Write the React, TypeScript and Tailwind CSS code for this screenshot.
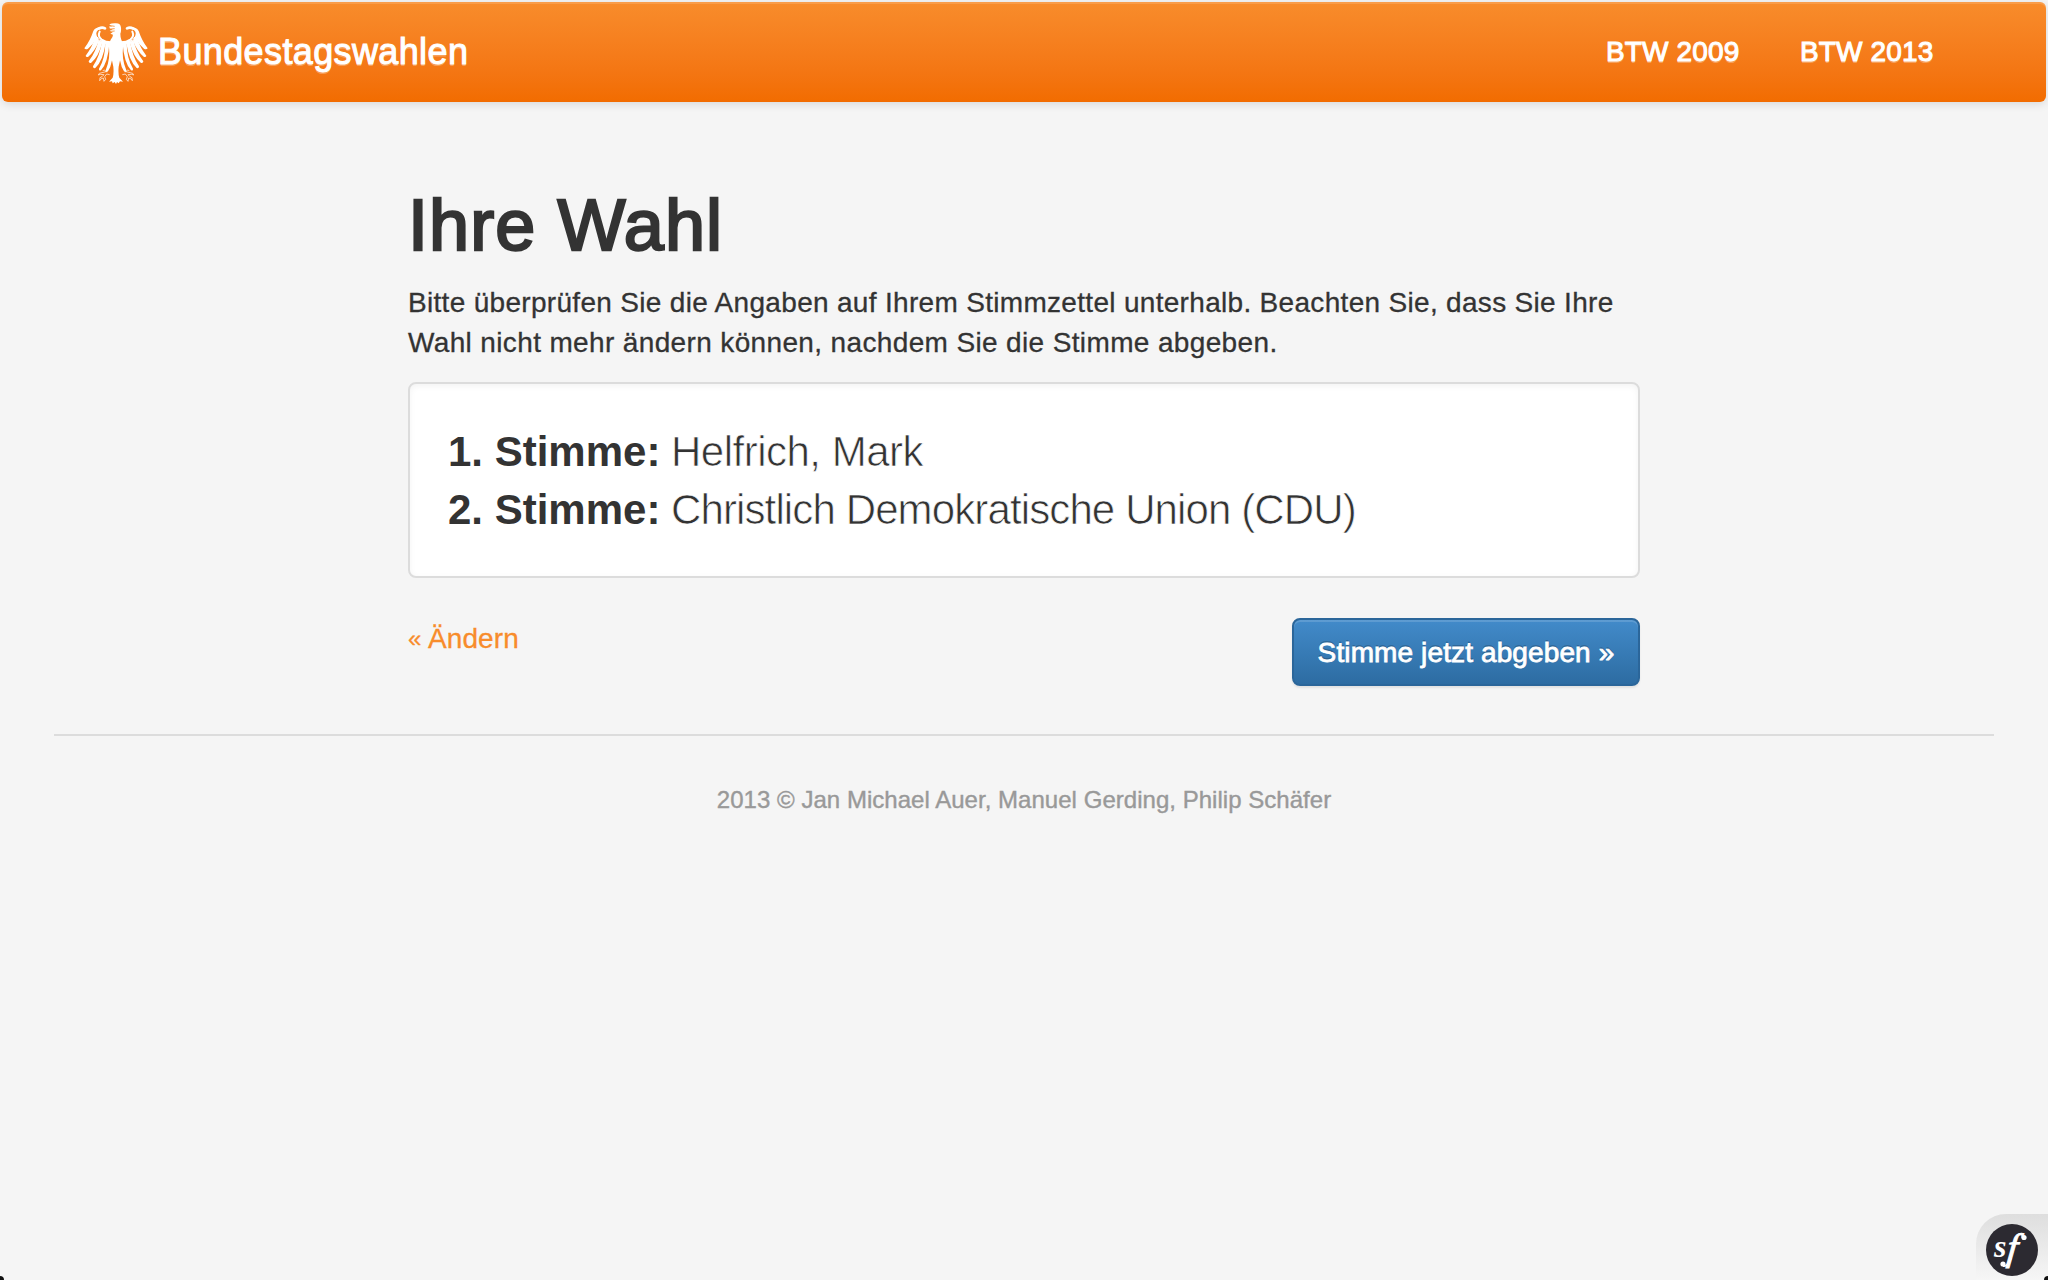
function WingAndTalon() {
  return (
    <>
      <g fill="none" stroke="#fff" strokeLinecap="round">
        <path d="M75 42Q66 37 56 43" strokeWidth="8" />
        <path d="M59 52Q52 66 65 76Q78 85 96 84" strokeWidth="6" />
      </g>
      <g fill="#fff">
        <path d="M60 39Q46 39 40 50Q30 80 13 102Q17 107 24 103Q40 90 48 74L57 74Q46 62 50 52Q54 45 62 44Z" />
        <path d="M46 68Q36 100 17 124Q17 129 24 128Q44 112 57 80L54 68Z" />
        <path d="M56 76Q48 112 26 141Q26 147 33 146Q56 128 67 84Z" />
        <path d="M66 80Q60 124 39 156Q38 163 46 161Q69 140 77 86Z" />
        <path d="M76 83Q76 132 57 163Q56 171 63 168Q84 144 88 88Z" />
        <path d="M87 84Q92 135 77 168Q77 176 84 171Q100 148 100 86Z" />
        <path d="M60 76Q76 84 98 82V92Q70 92 54 74Z" />
      </g>
      <path
        d="M84 160L78 172L58 177L55 182L61 180L72 181L66 187L60 190L59 199L64 193L70 191L72 201L77 195L74 187L80 179L89 181M80 174L74 167L68 169"
        fill="none"
        stroke="#fff"
        strokeWidth="2.4"
        strokeOpacity=".85"
      />
    </>
  );
}

function Eagle() {
  return (
    <svg viewBox="12 26 192 183" className="mt-0.5 h-[61px] w-16 shrink-0" aria-hidden="true">
      <WingAndTalon />
      <g transform="translate(216 0) scale(-1 1)">
        <WingAndTalon />
      </g>
      <path
        fill="#fff"
        d="M88 30Q96 26 108 27Q122 27 123 40Q124 50 121 58Q121 69 124 76Q133 90 126 116Q120 136 116 157Q114 178 118 190L129 202L120 201L116 207L111 203L108 209L104 203L98 207L96 201L87 202L98 190Q102 178 100 157Q96 136 90 116Q83 90 92 76Q99 68 99 61L91 58L98 54L89 49L98 46L89 42L88 36L96 37Z"
      />
      <path d="M91 34L104 36M92 44L104 43M94 51L104 50" stroke="#f6831f" strokeWidth="2.4" fill="none" />
    </svg>
  );
}

function Navbar() {
  return (
    <header className="mx-0.5 mt-0.5 flex h-[100px] items-center rounded-md bg-linear-to-b from-[#f88c2b] to-[#f26c00] pr-[112px] pl-[82px] text-white shadow-[inset_0_2px_0_rgba(255,255,255,0.15),0_2px_10px_rgba(0,0,0,0.12)] [text-shadow:0_2px_0_rgba(255,255,255,0.3)]">
      <a className="flex items-center gap-[10px]">
        <Eagle />
        <span className="text-[36px] leading-10 tracking-[0.38px] [-webkit-text-stroke:1px_white]">Bundestagswahlen</span>
      </a>
      <nav className="ml-auto flex gap-[60px] text-[28px] leading-10 tracking-[0.15px] [-webkit-text-stroke:1px_white]">
        <a className="w-[134px] whitespace-nowrap">BTW 2009</a>
        <a className="w-[134px] whitespace-nowrap">BTW 2013</a>
      </nav>
    </header>
  );
}

function Vote({ label, choice, spacing }: { label: string; choice: string; spacing: string }) {
  return (
    <div className="flex whitespace-nowrap">
      <b className="w-[223px]">{label}</b>
      <span className={`${spacing} [-webkit-text-stroke:0.7px_white]`}>{choice}</span>
    </div>
  );
}

function DebugToolbar() {
  return (
    <div className="fixed right-0 bottom-0 flex h-[66px] w-[72px] rounded-tl-[30px] bg-linear-to-b from-[#dedede] to-[#f6f6f6] pt-[10px] pl-[10px]">
      <svg viewBox="0 0 52 52" className="size-[52px]" aria-label="Symfony">
        <circle cx="26" cy="26" r="26" fill="#2c2a31" />
        <text x="8" y="33" fill="#fff" fontFamily="Liberation Serif, serif" fontStyle="italic" fontWeight="bold" fontSize="32">s</text>
        <text x="20" y="36" fill="#fff" fontFamily="Liberation Serif, serif" fontStyle="italic" fontSize="38" stroke="#fff" strokeWidth="1" transform="skewX(-6) translate(4 0)">f</text>
        <circle cx="38" cy="13.5" r="2.6" fill="#fff" />
        <circle cx="17" cy="40" r="2.6" fill="#fff" />
        <path d="M17 42Q22 43 25 34" stroke="#fff" strokeWidth="2" fill="none" />
      </svg>
    </div>
  );
}

export default function App() {
  return (
    <div className="flow-root min-h-screen bg-[#f5f5f5] font-['Liberation_Sans',Arial,sans-serif] text-[#333]">
      <Navbar />
      <main className="mx-auto mt-[83px] w-[1232px]">
        <h1 className="text-[72px] leading-[80px] tracking-[1.08px] [-webkit-text-stroke:2.4px_#333]">Ihre Wahl</h1>
        <p className="mt-[18px] text-[28px] leading-10 whitespace-nowrap [-webkit-text-stroke:0.3px_#333]">
          <span className="block tracking-[0.31px]">
            Bitte überprüfen Sie die Angaben auf Ihrem Stimmzettel unterhalb. Beachten Sie, dass Sie Ihre
          </span>
          <span className="block tracking-[0.36px]">Wahl nicht mehr ändern können, nachdem Sie die Stimme abgeben.</span>
        </p>
        <section className="mt-[19px] rounded-lg border-2 border-[#dcdcdc] bg-white px-[38px] pt-[39px] pb-[37px] text-[42px] leading-[58px] shadow-[inset_0_2px_6px_rgba(0,0,0,0.05)]">
          <Vote label="1. Stimme:" choice="Helfrich, Mark" spacing="tracking-[-0.5px]" />
          <Vote label="2. Stimme:" choice="Christlich Demokratische Union (CDU)" spacing="tracking-[-0.88px]" />
        </section>
        <div className="mt-10 flex items-start justify-between text-[28px] leading-10">
          <a className="mt-px flex gap-[6px] tracking-[0.1px] text-[#f88c2b] [-webkit-text-stroke:0.3px_#f88c2b]">
            <span className="w-[14px] text-[24px]">«</span>
            <span>Ändern</span>
          </a>
          <button className="h-[68px] w-[348px] rounded-lg border-2 border-[#2b669a] bg-linear-to-b from-[#428bca] to-[#2d6ca2] pt-px text-center tracking-[0.12px] whitespace-nowrap text-white shadow-[inset_0_2px_0_rgba(255,255,255,0.15),0_2px_2px_rgba(0,0,0,0.075)] [-webkit-text-stroke:0.8px_white] [text-shadow:0_-2px_0_rgba(0,0,0,0.2)]">
            Stimme jetzt abgeben »
          </button>
        </div>
      </main>
      <footer className="mx-[54px] mt-12 border-t-2 border-[#dcdcdc] pt-[44px] text-center text-[24px] leading-10 tracking-[0.03px] text-[#999] [-webkit-text-stroke:0.4px_#999]">
        2013 © Jan Michael Auer, Manuel Gerding, Philip Schäfer
      </footer>
      <DebugToolbar />
      <div className="fixed bottom-0 left-0 size-1 rounded-tr-sm bg-[#111]" />
      <div className="fixed right-0 bottom-0 size-1 rounded-tl-sm bg-[#111]" />
    </div>
  );
}
